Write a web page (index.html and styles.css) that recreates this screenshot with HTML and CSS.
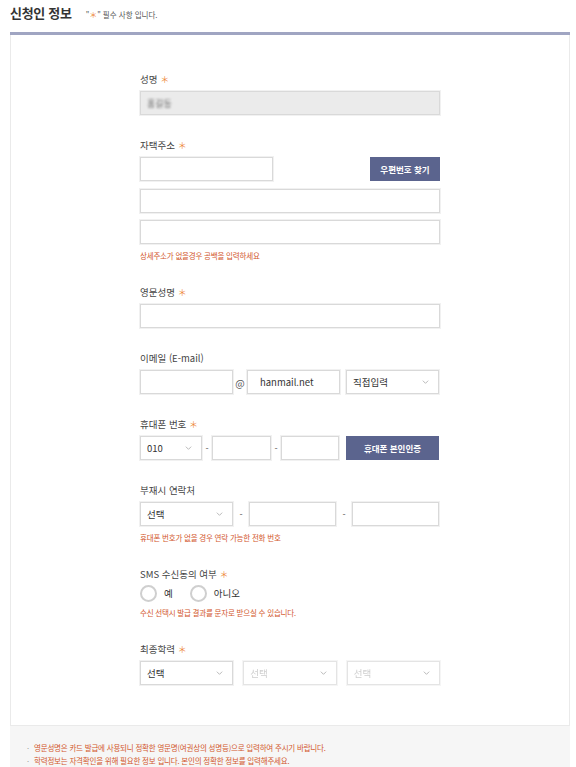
FILE: index.html
```html
<!DOCTYPE html>
<html lang="ko">

<head>
    <meta charset="UTF-8">
    <meta name="viewport" content="width=device-width, initial-scale=1.0">
    <title>신청인 정보</title>
    <link rel="stylesheet" href="styles.css">
</head>

<body>
    <div class="pageTitle">
        <h2 class="pageTitleText">신청인 정보</h2>
        <span class="pageTitleNote">"<em class="star">＊</em>" 필수 사항 입니다.</span>
    </div>

    <div class="formPanel">
        <div class="formBody">

            <div class="field">
                <div class="fieldLabel">성명 <em class="star">＊</em></div>
                <div class="fieldRow">
                    <div class="input inputReadonly"><span class="blurName">홍길동</span></div>
                </div>
            </div>

            <div class="field">
                <div class="fieldLabel">자택주소 <em class="star">＊</em></div>
                <div class="fieldRow rowSpread">
                    <input class="input inputZip" type="text">
                    <button class="btn btnZip">우편번호 찾기</button>
                </div>
                <div class="fieldRow rowStack">
                    <input class="input" type="text">
                </div>
                <div class="fieldRow rowStack rowStackTight">
                    <input class="input" type="text">
                </div>
                <p class="fieldHint">상세주소가 없을경우 공백을 입력하세요</p>
            </div>

            <div class="field">
                <div class="fieldLabel">영문성명 <em class="star">＊</em></div>
                <div class="fieldRow">
                    <input class="input" type="text">
                </div>
            </div>

            <div class="field">
                <div class="fieldLabel">이메일 (E-mail)</div>
                <div class="fieldRow">
                    <input class="input w93" type="text">
                    <span class="sep sepAt">@</span>
                    <input class="input w93" type="text" value="hanmail.net">
                    <div class="select w93 ml6">
                        <select><option>직접입력</option></select>
                        <svg class="selectArrow" viewBox="0 0 10 6"><polyline points="1 1 5 5 9 1"></polyline></svg>
                    </div>
                </div>
            </div>

            <div class="field">
                <div class="fieldLabel">휴대폰 번호 <em class="star">＊</em></div>
                <div class="fieldRow">
                    <div class="select w62">
                        <select><option>010</option></select>
                        <svg class="selectArrow" viewBox="0 0 10 6"><polyline points="1 1 5 5 9 1"></polyline></svg>
                    </div>
                    <span class="sep sepDash">-</span>
                    <input class="input w59" type="text">
                    <span class="sep sepDash">-</span>
                    <input class="input w58" type="text">
                    <button class="btn btnPhone">휴대폰 본인인증</button>
                </div>
            </div>

            <div class="field">
                <div class="fieldLabel">부재시 연락처</div>
                <div class="fieldRow">
                    <div class="select w93">
                        <select><option>선택</option></select>
                        <svg class="selectArrow" viewBox="0 0 10 6"><polyline points="1 1 5 5 9 1"></polyline></svg>
                    </div>
                    <span class="sep sepWide">-</span>
                    <input class="input w87" type="text">
                    <span class="sep sepWide">-</span>
                    <input class="input w87" type="text">
                </div>
                <p class="fieldHint">휴대폰 번호가 없을 경우 연락 가능한 전화 번호</p>
            </div>

            <div class="field">
                <div class="fieldLabel">SMS 수신동의 여부 <em class="star">＊</em></div>
                <div class="radioRow">
                    <label class="radio"><span class="radioCircle"></span>예</label>
                    <label class="radio"><span class="radioCircle"></span>아니오</label>
                </div>
                <p class="fieldHint">수신 선택시 발급 결과를 문자로 받으실 수 있습니다.</p>
            </div>

            <div class="field">
                <div class="fieldLabel">최종학력 <em class="star">＊</em></div>
                <div class="fieldRow rowGap">
                    <div class="select grow">
                        <select><option>선택</option></select>
                        <svg class="selectArrow" viewBox="0 0 10 6"><polyline points="1 1 5 5 9 1"></polyline></svg>
                    </div>
                    <div class="select grow selectDisabled">
                        <select disabled><option>선택</option></select>
                        <svg class="selectArrow" viewBox="0 0 10 6"><polyline points="1 1 5 5 9 1"></polyline></svg>
                    </div>
                    <div class="select grow selectDisabled">
                        <select disabled><option>선택</option></select>
                        <svg class="selectArrow" viewBox="0 0 10 6"><polyline points="1 1 5 5 9 1"></polyline></svg>
                    </div>
                </div>
            </div>

        </div>

        <ul class="formNotes">
            <li>영문성명은 카드 발급에 사용되니 정확한 영문명(여권상의 성명등)으로 입력하여 주시기 바랍니다.</li>
            <li>학력정보는 자격확인을 위해 필요한 정보 입니다. 본인의 정확한 정보를 입력해주세요.</li>
        </ul>
    </div>
</body>

</html>
```

FILE: styles.css
```css
* {
    box-sizing: border-box;
}

body,
html {
    margin: 0;
    background: #fff;
    font-family: 'Noto Sans CJK KR', 'Noto Sans', sans-serif;
    color: #333;
}

.star {
    font-style: normal;
    font-size: 9px;
    color: #ee8a3c;
}

.pageTitle {
    display: flex;
    align-items: baseline;
    height: 32px;
    padding: 3px 0 0 10px;
}

.pageTitleText {
    margin: 0;
    font-size: 13px;
    font-weight: 700;
    color: #333;
    letter-spacing: -0.3px;
}

.pageTitleNote {
    margin-left: 14px;
    font-size: 7.5px;
    color: #555;
}

.pageTitleNote .star {
    font-size: 8px;
}

.formPanel {
    width: 560px;
    margin-left: 10px;
    border-top: 3px solid #a0a5c2;
    background: #f6f6f6;
}

.formBody {
    background: #fff;
    border: 1px solid #eaeaea;
    border-top: none;
    padding: 37px 0 17px 129px;
}

.field {
    width: 300px;
    margin-bottom: 23px;
}

.fieldLabel {
    height: 14px;
    line-height: 14px;
    font-size: 9.5px;
    color: #444;
    margin-bottom: 5px;
}

.fieldRow {
    display: flex;
    align-items: center;
    height: 24px;
}

.rowSpread {
    justify-content: space-between;
}

.rowStack {
    margin-top: 8px;
}

.rowStackTight {
    margin-top: 7px;
}

.rowGap {
    gap: 10px;
}

.input {
    display: block;
    width: 100%;
    height: 24px;
    margin: 0;
    padding: 0 12px;
    border: 1px solid #d9d9d9;
    box-shadow: 0 0 0 1px #f1f1f1;
    background: #fff;
    font-family: inherit;
    font-size: 9.5px;
    color: #333;
    outline: none;
}

.inputReadonly {
    display: flex;
    align-items: center;
    background: #ebebeb;
    padding-left: 6px;
}

.blurName {
    color: #666;
    font-size: 9px;
    filter: blur(1.2px);
}

.inputZip {
    width: 133px;
}

.w93 { width: 93px; flex: none; }
.w87 { width: 87px; flex: none; }
.w62 { width: 62px; flex: none; }
.w59 { width: 59px; flex: none; }
.w58 { width: 58px; flex: none; }
.ml6 { margin-left: 6px; }
.grow { flex: 1; }

.sep {
    flex: none;
    text-align: center;
    font-size: 9px;
    color: #555;
}

.sepAt {
    width: 14px;
    font-size: 10px;
}

.sepDash {
    width: 10px;
}

.sepWide {
    width: 16px;
}

.btn {
    flex: none;
    height: 24px;
    border: none;
    background: #5b648e;
    color: #fff;
    font-family: inherit;
    font-size: 8.5px;
    font-weight: 700;
    cursor: pointer;
    padding: 0;
}

.btnZip {
    width: 70px;
}

.btnPhone {
    width: 93px;
    margin-left: 7px;
}

.select {
    position: relative;
    height: 24px;
}

.select select {
    display: block;
    width: 100%;
    height: 24px;
    margin: 0;
    padding: 0 6px;
    border: 1px solid #d9d9d9;
    box-shadow: 0 0 0 1px #f1f1f1;
    border-radius: 0;
    background: #fff;
    -webkit-appearance: none;
    appearance: none;
    font-family: inherit;
    font-size: 9.5px;
    color: #333;
    outline: none;
}

.selectDisabled select {
    color: #bbb;
}

.selectArrow {
    position: absolute;
    right: 10px;
    top: 10px;
    width: 7px;
    height: 4px;
    fill: none;
    stroke: #aaa;
    stroke-width: 1.2;
    pointer-events: none;
}

.fieldHint {
    margin: 6px 0 0;
    height: 12px;
    line-height: 12px;
    font-size: 7.5px;
    color: #d2562c;
    letter-spacing: -0.2px;
}

.radioRow {
    display: flex;
    align-items: center;
    height: 16px;
    margin-top: -1px;
}

.radio {
    display: flex;
    align-items: center;
    font-size: 9.5px;
    color: #333;
    margin-right: 17px;
}

.radioCircle {
    width: 17px;
    height: 17px;
    border: 2px solid #cfcfcf;
    border-radius: 50%;
    margin-right: 7px;
    background: #fff;
}

.formNotes {
    list-style: none;
    margin: 0;
    padding: 15px 0 2px 17px;
}

.formNotes li {
    position: relative;
    padding-left: 7px;
    height: 13px;
    line-height: 13px;
    font-size: 7.5px;
    color: #d2562c;
    letter-spacing: -0.2px;
}

.formNotes li::before {
    content: '·';
    position: absolute;
    left: 0;
    color: #999;
}
```
